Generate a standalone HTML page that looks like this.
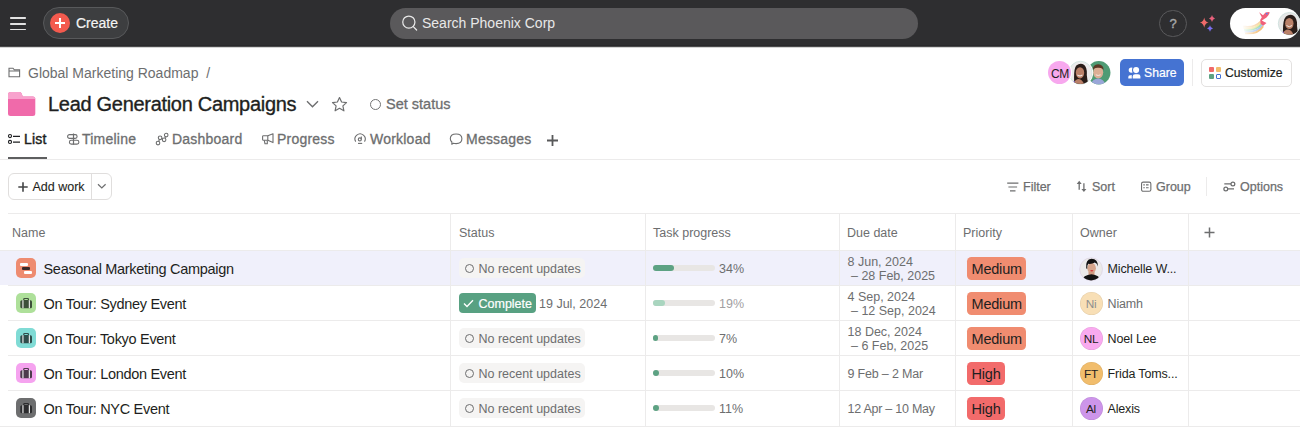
<!DOCTYPE html>
<html><head><meta charset="utf-8">
<style>
*{box-sizing:border-box;margin:0;padding:0}
html,body{width:1300px;height:437px;overflow:hidden;background:#fff;font-family:"Liberation Sans",sans-serif;color:#1e1f21}
.abs{position:absolute}
.t{position:absolute;white-space:nowrap;line-height:1}
svg{position:absolute;overflow:visible}
#top{position:absolute;left:0;top:0;width:1300px;height:45px;background:#2e2e30}
.ham{position:absolute;left:10.3px;width:15.8px;height:1.6px;background:#e2e2e2;border-radius:0.8px}
#create{position:absolute;left:43px;top:7px;width:86px;height:32px;border-radius:16px;background:#3d3e40;border:1px solid #58595b}
#search{position:absolute;left:390px;top:7.6px;width:527.6px;height:31.6px;border-radius:16px;background:#5a595b}
.tab{position:absolute;top:131.6px;font-size:14px;letter-spacing:0.22px;color:#6d6e6f;line-height:1;white-space:nowrap;-webkit-text-stroke:0.3px #6d6e6f}
.tb{position:absolute;top:181px;font-size:12.5px;color:#6d6e6f;line-height:1;white-space:nowrap;-webkit-text-stroke:0.25px #6d6e6f}
.hdr{position:absolute;top:227px;font-size:12.5px;color:#6d6e6f;line-height:1;white-space:nowrap}
.hl{position:absolute;left:0;width:1300px;height:1px;background:#ecebeb}
.vl{position:absolute;top:214px;height:212px;width:1px;background:#ecebeb}
.name{position:absolute;left:43.5px;font-size:14.5px;letter-spacing:-0.3px;color:#1e1f21;line-height:1;white-space:nowrap}
.ticon{position:absolute;left:16px;width:20px;height:20px;border-radius:5px}
.pill{position:absolute;left:458.5px;width:126px;height:20px;border-radius:5px;background:#f5f4f3}
.pill .c{position:absolute;left:6px;top:6px;width:9px;height:9px;border:1.3px solid #6d6e6f;border-radius:50%}
.pill .t{left:20px;top:5px;font-size:12.5px;color:#6d6e6f}
.bar{position:absolute;left:653px;width:62px;height:6px;border-radius:3px;background:#e8e6e4}
.bar i{position:absolute;left:0;top:0;height:6px;border-radius:3px;background:#5da283}
.pct{position:absolute;left:719px;font-size:12.5px;color:#6d6e6f;line-height:1}
.due{position:absolute;left:847.5px;font-size:12.5px;color:#6d6e6f;line-height:14px;white-space:pre}
.prio{position:absolute;left:967px;height:23.5px;border-radius:4.5px;font-size:14.5px;color:#1e1f21;padding:0 4.5px;line-height:24px;letter-spacing:-0.2px}
.av{position:absolute;left:1079.5px;width:23px;height:23px;border-radius:50%;font-size:11.8px;text-align:center;line-height:24px;box-shadow:inset 0 0 0 0.6px rgba(0,0,0,0.08);color:#1e1f21;letter-spacing:-0.3px}
.own{position:absolute;left:1107.5px;font-size:12.5px;color:#1e1f21;line-height:1;white-space:nowrap;letter-spacing:-0.15px}
</style></head><body>
<div class="abs" style="left:0;top:45px;width:1300px;height:1px;background:#28282a"></div><div class="abs" style="left:0;top:46px;width:1300px;height:1px;background:#4a4a4b"></div><div class="abs" style="left:0;top:47px;width:1300px;height:1px;background:#d4d4d4"></div>
<div id="top">
  <div class="ham" style="top:17.1px"></div>
  <div class="ham" style="top:23px"></div>
  <div class="ham" style="top:28.9px"></div>
  <div id="create"></div>
  <div class="abs" style="left:50px;top:13px;width:20px;height:20px;border-radius:50%;background:#f35a4e"></div>
  <div class="abs" style="left:55px;top:22.3px;width:9.6px;height:1.6px;background:#fff"></div>
  <div class="abs" style="left:59px;top:18.3px;width:1.6px;height:9.6px;background:#fff"></div>
  <div class="t" style="left:76px;top:16px;font-size:14px;color:#f5f4f3;-webkit-text-stroke:0.2px #f5f4f3">Create</div>
  <div id="search"></div>
  <svg style="left:400px;top:15px" width="20" height="18"><circle cx="8.85" cy="7.1" r="6.1" fill="none" stroke="#e8e8e8" stroke-width="1.25"/><path d="M13.3 11.6 L16.6 15" stroke="#e8e8e8" stroke-width="1.3" stroke-linecap="round"/></svg>
  <div class="t" style="left:422px;top:16px;font-size:14px;color:#e8e8e8">Search Phoenix Corp</div>
  <div class="abs" style="left:1159.3px;top:9.5px;width:27.4px;height:27.4px;border-radius:50%;border:1px solid #5a5a5c"></div>
  <div class="t" style="left:1169.5px;top:17.3px;font-size:13px;color:#a8a8a9;-webkit-text-stroke:0.4px #a8a8a9">?</div>
  <svg style="left:1196px;top:13px" width="24" height="22">
    <path d="M8.2 4.5 Q8.9 8.8 12.6 9.6 Q8.9 10.4 8.2 14.7 Q7.5 10.4 3.8 9.6 Q7.5 8.8 8.2 4.5Z" fill="#f06a6a"/>
    <path d="M16 2 Q16.5 5 19 5.5 Q16.5 6 16 9 Q15.5 6 13 5.5 Q15.5 5 16 2Z" fill="#e8617c"/>
    <path d="M14 12.2 Q14.5 15 17 15.5 Q14.5 16 14 18.8 Q13.5 16 11 15.5 Q13.5 15 14 12.2Z" fill="#7a6ff0"/>
  </svg>
  <div class="abs" style="left:1229.5px;top:7.5px;width:70.5px;height:31.5px;border-radius:16px;background:#fff"></div>
  <svg style="left:1240px;top:8px" width="36" height="30">
    <defs><linearGradient id="fade" x1="0" y1="0" x2="1" y2="0"><stop offset="0.1" stop-color="#fff" stop-opacity="0.95"/><stop offset="0.85" stop-color="#fff" stop-opacity="0"/></linearGradient></defs>
    <path d="M3 18.5 Q14 20.5 20.5 13.5" fill="none" stroke="#f7cfa0" stroke-width="1.8"/>
    <path d="M3.5 20.2 Q15 22 21.3 14.6" fill="none" stroke="#f5e39a" stroke-width="1.8"/>
    <path d="M4 21.9 Q16 23.5 22 15.8" fill="none" stroke="#9fdcae" stroke-width="1.8"/>
    <path d="M4.5 23.6 Q17 25 22.6 17" fill="none" stroke="#a9c6f2" stroke-width="1.8"/>
    <path d="M5 25.3 Q18 26.5 23.2 18.2" fill="none" stroke="#f4c07a" stroke-width="1.8"/>
    <rect x="0" y="10" width="24" height="20" fill="url(#fade)"/>
    <path d="M19.1 4.2 L23 7.3 L25.5 4.6 L28.5 4 L29.8 4.4 L28.4 7.2 L26.5 9.5 L24.6 10.7 L21.8 12.4 L24 13.8 L26.5 15.1 L23.2 17.8 L20.6 15.8 L20.2 12 L21.8 9.2 Z" fill="#f0607a"/>
    <circle cx="26.8" cy="5.6" r="0.9" fill="#5a7af0"/>
  </svg>
  <svg style="left:1278px;top:12px" width="23" height="24">
    <defs><clipPath id="c0"><circle cx="11.5" cy="11.6" r="11"/></clipPath></defs>
    <circle cx="11.5" cy="11.6" r="11.2" fill="#e6e6e6" stroke="#c6dcd8" stroke-width="0.7"/>
    <g clip-path="url(#c0)">
      <path d="M5 22 Q4.5 8 8 4.5 Q12 1.5 16 4 Q19.5 7 19 14 Q19.5 20 21 24 L16 24 Z" fill="#2a1d19"/>
      <ellipse cx="11.3" cy="11.5" rx="4.2" ry="5.6" fill="#b98068"/>
      <path d="M8.5 13.5 Q11.3 16 14 13.5" fill="none" stroke="#f0e6e0" stroke-width="1"/>
      <path d="M3 24 Q6 17.5 10 17.5 Q14 18 16 24Z" fill="#b98068"/>
      <path d="M2 23 Q3 20 5.5 19.5 L6 24Z" fill="#7a56e0"/>
    </g>
  </svg>
</div>

<!-- header -->
<svg style="left:8px;top:67px" width="13" height="11"><path d="M1 1.2 H5 L6.3 2.8 H11.6 V9.8 H1 Z M1 4 H11.6" fill="none" stroke="#6d6e6f" stroke-width="1.1"/></svg>
<div class="t" style="left:28px;top:66px;font-size:14px;color:#6d6e6f">Global Marketing Roadmap&nbsp; /</div>

<svg style="left:8px;top:91.5px" width="28" height="25"><path d="M0 2.5 Q0 0 2.5 0 H11.5 Q12.8 0 13.5 1.2 L14.8 4.4 H24.8 Q27.3 4.4 27.3 6.9 V21.6 Q27.3 24.1 24.8 24.1 H2.5 Q0 24.1 0 21.6Z" fill="#f06aaa"/><path d="M0 2.5 Q0 0 2.5 0 H11.5 Q12.8 0 13.5 1.2 L14.8 4.4 H24.8 Q27.3 4.4 27.3 6.9 V7 H0Z" fill="#f8a2cd"/></svg>
<div class="t" style="left:48px;top:94px;font-size:20px;letter-spacing:-0.3px;color:#1e1f21;-webkit-text-stroke:0.35px #1e1f21">Lead Generation Campaigns</div>
<svg style="left:306px;top:100px" width="14" height="9"><path d="M1 1.2 L6.5 6.7 L12 1.2" fill="none" stroke="#6d6e6f" stroke-width="1.4"/></svg>
<svg style="left:331px;top:95.5px" width="18" height="18"><path d="M8.5 1.5 L10.6 6 L15.5 6.6 L11.9 9.9 L12.9 14.8 L8.5 12.3 L4.1 14.8 L5.1 9.9 L1.5 6.6 L6.4 6 Z" fill="none" stroke="#6d6e6f" stroke-width="1.2" stroke-linejoin="round"/></svg>
<div class="abs" style="left:370px;top:98.5px;width:11.2px;height:11.2px;border-radius:50%;border:1px solid #737475"></div>
<div class="t" style="left:386px;top:97px;font-size:14.5px;color:#6d6e6f;-webkit-text-stroke:0.3px #6d6e6f">Set status</div>

<!-- right header -->
<svg style="left:1085px;top:59px" width="28" height="28">
  <defs><clipPath id="c2"><circle cx="13.8" cy="13.75" r="11.5"/></clipPath></defs>
  <circle cx="13.8" cy="13.75" r="11.65" fill="#4f9b74"/>
  <g clip-path="url(#c2)">
    <ellipse cx="13.2" cy="13.3" rx="5" ry="6.2" fill="#dcae95"/>
    <path d="M7.8 11.5 Q7.5 5.5 13.2 5.3 Q18.8 5.5 18.6 11.5 Q17.6 8.5 13.2 8.8 Q8.8 8.5 7.8 11.5Z" fill="#5b3a26"/>
    <path d="M10.8 15.8 Q13.2 17.2 15.6 15.8" fill="none" stroke="#f5eee8" stroke-width="0.9"/>
    <path d="M5 27 Q7 19.5 13.2 19.5 Q19 19.5 21 27Z" fill="#9aa6d8"/>
  </g>
</svg>
<svg style="left:1067px;top:59px" width="28" height="28">
  <defs><clipPath id="c1"><circle cx="13.5" cy="13.75" r="11.2"/></clipPath></defs>
  <circle cx="13.5" cy="13.75" r="12.7" fill="#fff"/>
  <circle cx="13.5" cy="13.75" r="11.5" fill="#ecebeb" stroke="#c9e2dc" stroke-width="0.7"/>
  <g clip-path="url(#c1)">
    <path d="M7.3 25 Q6.3 10 9.3 6.5 Q13.3 3.5 17.3 6 Q20.3 9 19.8 16 Q20.1 22 22.3 26 L16.8 26 Z" fill="#2a1d19"/>
    <ellipse cx="13" cy="13.8" rx="4.2" ry="5.6" fill="#b98068"/>
    <path d="M10.4 15.8 Q13 18 15.4 15.8" fill="none" stroke="#f3ece8" stroke-width="1.1"/>
    <path d="M5.3 27 Q7.8 20 11.8 20 Q15.8 20.5 17.8 27Z" fill="#b98068"/>
    <path d="M3.8 26 Q4.8 22.5 7.6 22 L8.1 27Z" fill="#7a56e0"/>
  </g>
</svg>
<div class="abs" style="left:1046.9px;top:60.1px;width:25.3px;height:25.3px;border-radius:50%;background:#fff"></div>
<div class="abs" style="left:1048px;top:61.1px;width:23.3px;height:23.3px;border-radius:50%;background:#f7a8ee"></div>
<div class="t" style="left:1051px;top:68px;font-size:12px;color:#1e1f21;letter-spacing:-0.3px">CM</div>
<div class="abs" style="left:1120px;top:59px;width:64px;height:27px;border-radius:5px;background:#4573d2"></div>
<svg style="left:1124px;top:62px" width="22" height="22"><defs><mask id="shm"><rect width="22" height="22" fill="#fff"/><circle cx="12.1" cy="8.1" r="4.1" fill="#000"/><path d="M7.8 17 V14.3 Q7.8 11.3 11 11.3 H14 Q17 11.3 17 14.3 V17Z" fill="#000"/></mask></defs><g mask="url(#shm)"><circle cx="7.4" cy="8.1" r="2.7" fill="#fff"/><path d="M4.3 16.6 V14.9 Q4.3 13.2 6 13.2 H8 V16.6Z" fill="#fff"/></g><circle cx="12.1" cy="8.1" r="3.05" fill="#fff"/><path d="M8.7 16.6 V14.6 Q8.7 12.2 11.1 12.2 H14 Q16.4 12.2 16.4 14.6 V16.6Z" fill="#fff"/></svg>
<div class="t" style="left:1144px;top:67px;font-size:12.2px;color:#fff;-webkit-text-stroke:0.2px #fff">Share</div>
<div class="abs" style="left:1192px;top:59px;width:1px;height:27px;background:#ecebeb"></div>
<div class="abs" style="left:1201px;top:59px;width:91px;height:27.5px;border-radius:5px;border:1px solid #e3e1e0"></div>
<div class="abs" style="left:1209px;top:67px;width:5px;height:5px;border-radius:1px;background:#f06a6a"></div>
<div class="abs" style="left:1216px;top:67px;width:5px;height:5px;border-radius:1px;background:#f1bd6c"></div>
<div class="abs" style="left:1209px;top:74px;width:5px;height:5px;border-radius:1px;background:#5da283"></div>
<div class="abs" style="left:1216px;top:74px;width:5px;height:5px;border-radius:1px;border:1.2px solid #4573d2"></div>
<div class="t" style="left:1225px;top:67px;font-size:12.2px;color:#1e1f21;-webkit-text-stroke:0.2px #1e1f21">Customize</div>

<!-- tabs -->
<svg style="left:7px;top:133px" width="15" height="13"><g fill="none" stroke="#1e1f21" stroke-width="1.1"><circle cx="3" cy="3.1" r="1.55"/><circle cx="3" cy="8.9" r="1.55"/><path d="M6 3.4 H13 M6 9.1 H13" stroke-width="1.2"/></g></svg>
<div class="tab" style="left:24px;color:#1e1f21;-webkit-text-stroke:0.45px #1e1f21">List</div>
<svg style="left:66px;top:133px" width="15" height="13"><rect x="1.6" y="1.6" width="9.5" height="3.8" rx="1.9" fill="none" stroke="#6d6e6f" stroke-width="1.1"/><rect x="3.4" y="7.3" width="9.5" height="3.8" rx="1.9" fill="none" stroke="#6d6e6f" stroke-width="1.1"/><path d="M7.5 0.5 V11.6" stroke="#6d6e6f" stroke-width="1.2"/></svg>
<div class="tab" style="left:82px">Timeline</div>
<svg style="left:155px;top:132px" width="15" height="14"><g fill="none" stroke="#6d6e6f" stroke-width="1.1"><circle cx="3" cy="11.1" r="1.8"/><circle cx="5.1" cy="5.8" r="1.8"/><circle cx="9.1" cy="7.8" r="1.8"/><circle cx="11.2" cy="3.1" r="1.8"/><path d="M3.7 9.4 L4.4 7.5 M6.7 6.6 L7.5 7 M9.9 6.1 L10.5 4.8"/></g></svg>
<div class="tab" style="left:172px">Dashboard</div>
<svg style="left:258px;top:128px" width="18" height="20"><g fill="none" stroke="#6d6e6f" stroke-width="1.1" stroke-linejoin="round"><path d="M5.4 7.7 H9.8 V12.3 H5.4 Q4.6 12.3 4.6 11.5 V8.5 Q4.6 7.7 5.4 7.7Z"/><path d="M9.8 7.7 L15 5.8 V14.6 L9.8 12.3"/><path d="M6.3 12.3 L7 15.8 H9.3 V12.5"/></g></svg>
<div class="tab" style="left:277px">Progress</div>
<svg style="left:350px;top:128px" width="20" height="20"><g fill="none" stroke="#6d6e6f" stroke-width="1.1"><path d="M5.7 13.6 A5.1 5.1 0 1 1 14.5 13.6"/><circle cx="9.8" cy="11.4" r="1.5"/><path d="M11.3 11.6 V8.4"/><path d="M8 15.4 H12.2"/></g></svg>
<div class="tab" style="left:370px">Workload</div>
<svg style="left:445px;top:128px" width="20" height="20"><path d="M8.4 15.3 Q9.7 15.6 11.1 15.6 Q16.9 15.6 16.9 10.8 Q16.9 6 11.1 6 Q5.3 6 5.3 10.8 Q5.3 12.8 6.9 14 L6.8 16.2 Z" fill="none" stroke="#6d6e6f" stroke-width="1.1" stroke-linejoin="round"/></svg>
<div class="tab" style="left:466px">Messages</div>
<svg style="left:546px;top:134px" width="13" height="13"><path d="M6.5 1 V12 M1 6.5 H12" stroke="#58595a" stroke-width="1.8"/></svg>
<div class="abs" style="left:8px;top:157px;width:39px;height:2px;background:#5e5f60"></div>
<div class="hl" style="top:159px"></div>

<!-- toolbar -->
<div class="abs" style="left:8px;top:173px;width:104px;height:27px;border:1px solid #e0dedd;border-radius:6px"></div>
<div class="abs" style="left:91px;top:174px;width:1px;height:25px;background:#e0dedd"></div>
<svg style="left:17.5px;top:181.5px" width="11" height="11"><path d="M5 0.3 V9.7 M0.3 5 H9.7" stroke="#444546" stroke-width="1.6"/></svg>
<div class="t" style="left:32.5px;top:181px;font-size:12.5px;color:#1e1f21;-webkit-text-stroke:0.1px #1e1f21">Add work</div>
<svg style="left:97px;top:183px" width="10" height="7"><path d="M1 1.3 L4.8 5 L8.6 1.3" fill="none" stroke="#6d6e6f" stroke-width="1.2"/></svg>

<svg style="left:1007px;top:182px" width="12" height="10"><path d="M0.2 1.2 H11.4 M1.4 5 H10.1 M3 8.8 H8.5" stroke="#6d6e6f" stroke-width="1.2"/></svg>
<div class="tb" style="left:1023px">Filter</div>
<svg style="left:1070px;top:175px" width="25" height="23"><path d="M9.2 8 V14.7 M13.9 8.2 V14.6" stroke="#6d6e6f" stroke-width="1.3"/><path d="M6.7 8.9 L9.2 5.8 L11.7 8.9 Z M11.4 14 L13.9 17 L16.4 14 Z" fill="#6d6e6f"/></svg>
<div class="tb" style="left:1092px">Sort</div>
<svg style="left:1140px;top:181px" width="12" height="11"><rect x="1.55" y="1.15" width="9.3" height="9.1" rx="1.6" fill="none" stroke="#6d6e6f" stroke-width="1.1"/><path d="M3.3 3.9 H4.8 M6 3.9 H8.6 M3.3 6.8 H4.8 M6 6.8 H8.6" stroke="#6d6e6f" stroke-width="1.1"/></svg>
<div class="tb" style="left:1156px">Group</div>
<div class="abs" style="left:1206px;top:177px;width:1px;height:19px;background:#ecebeb"></div>
<svg style="left:1215px;top:175px" width="25" height="22"><g fill="none" stroke="#6d6e6f" stroke-width="1.25"><circle cx="17.9" cy="8.9" r="1.9"/><circle cx="10.8" cy="13.9" r="1.9"/><path d="M9.3 8.9 H16 M12.7 13.9 H19"/></g></svg>
<div class="tb" style="left:1240px">Options</div>

<!-- table -->
<div class="abs" style="left:8px;top:213px;width:1292px;height:1px;background:#ecebeb"></div>
<div class="hdr" style="left:12px">Name</div>
<div class="hdr" style="left:459px">Status</div>
<div class="hdr" style="left:653px">Task progress</div>
<div class="hdr" style="left:847px">Due date</div>
<div class="hdr" style="left:963px">Priority</div>
<div class="hdr" style="left:1080px">Owner</div>
<svg style="left:1204px;top:227px" width="11" height="11"><path d="M5.5 0.5 V10.5 M0.5 5.5 H10.5" stroke="#6d6e6f" stroke-width="1.5"/></svg>

<div class="abs" style="left:0;top:250px;width:1300px;height:35px;background:#f0f0fb"></div>
<div class="hl" style="top:250px"></div>
<div class="hl" style="top:285px;left:8px"></div>
<div class="hl" style="top:320px;left:8px"></div>
<div class="hl" style="top:355px;left:8px"></div>
<div class="hl" style="top:390px;left:8px"></div>
<div class="hl" style="top:426px"></div>
<div class="vl" style="left:450px"></div>
<div class="vl" style="left:645px"></div>
<div class="vl" style="left:839px"></div>
<div class="vl" style="left:955px"></div>
<div class="vl" style="left:1072px"></div>
<div class="vl" style="left:1188px"></div>

<!-- row icons -->
<div class="ticon" style="top:258px;background:#ee8b70"></div>
<div class="abs" style="left:20px;top:263px;width:8px;height:2.5px;background:#fff;border-radius:1px"></div>
<div class="abs" style="left:22px;top:267px;width:8px;height:3px;background:#3a2a2a;border-radius:1px"></div>
<div class="abs" style="left:24px;top:271px;width:8px;height:3px;background:#fff;border-radius:1px"></div>

<div class="ticon" style="top:293px;background:#aee09a"></div>
<div class="ticon" style="top:328px;background:#80dbd5"></div>
<div class="ticon" style="top:363px;background:#f5a3ef"></div>
<div class="ticon" style="top:398px;background:#6d6e6f"></div>
<svg style="left:19px;top:297px" width="15" height="13"><rect x="4.2" y="1" width="5.8" height="3" rx="1.2" fill="#3d4f3a"/><rect x="5.3" y="1.9" width="3.6" height="1.1" rx="0.5" fill="#aee09a"/><rect x="1.3" y="3.2" width="11.7" height="8" rx="1.5" fill="#3d4f3a"/><rect x="3.4" y="3.2" width="1.1" height="8" fill="#f4f4f4"/><rect x="9.8" y="3.2" width="1.1" height="8" fill="#f4f4f4"/></svg>
<svg style="left:19px;top:332px" width="15" height="13"><rect x="4.2" y="1" width="5.8" height="3" rx="1.2" fill="#2f4d4b"/><rect x="5.3" y="1.9" width="3.6" height="1.1" rx="0.5" fill="#80dbd5"/><rect x="1.3" y="3.2" width="11.7" height="8" rx="1.5" fill="#2f4d4b"/><rect x="3.4" y="3.2" width="1.1" height="8" fill="#f4f4f4"/><rect x="9.8" y="3.2" width="1.1" height="8" fill="#f4f4f4"/></svg>
<svg style="left:19px;top:367px" width="15" height="13"><rect x="4.2" y="1" width="5.8" height="3" rx="1.2" fill="#4d3b4c"/><rect x="5.3" y="1.9" width="3.6" height="1.1" rx="0.5" fill="#f5a3ef"/><rect x="1.3" y="3.2" width="11.7" height="8" rx="1.5" fill="#4d3b4c"/><rect x="3.4" y="3.2" width="1.1" height="8" fill="#f4f4f4"/><rect x="9.8" y="3.2" width="1.1" height="8" fill="#f4f4f4"/></svg>
<svg style="left:19px;top:402px" width="15" height="13"><rect x="4.2" y="1" width="5.8" height="3" rx="1.2" fill="#2c2c2e"/><rect x="5.3" y="1.9" width="3.6" height="1.1" rx="0.5" fill="#6d6e6f"/><rect x="1.3" y="3.2" width="11.7" height="8" rx="1.5" fill="#2c2c2e"/><rect x="3.4" y="3.2" width="1.1" height="8" fill="#f4f4f4"/><rect x="9.8" y="3.2" width="1.1" height="8" fill="#f4f4f4"/></svg>

<div class="name" style="top:262px">Seasonal Marketing Campaign</div>
<div class="name" style="top:297px">On Tour: Sydney Event</div>
<div class="name" style="top:332px">On Tour: Tokyo Event</div>
<div class="name" style="top:367px">On Tour: London Event</div>
<div class="name" style="top:402px">On Tour: NYC Event</div>

<!-- status -->
<div class="pill" style="top:258px"><div class="c"></div><div class="t">No recent updates</div></div>
<div class="abs" style="left:458.5px;top:293px;width:77.3px;height:20px;border-radius:4px;background:#58a182"></div>
<svg style="left:463px;top:299px" width="11" height="9"><path d="M1 4.5 L4 7.5 L10 1.3" fill="none" stroke="#fff" stroke-width="1.4"/></svg>
<div class="t" style="left:478.5px;top:298px;font-size:12.5px;color:#fff;-webkit-text-stroke:0.2px #fff">Complete</div>
<div class="t" style="left:539px;top:298px;font-size:12.5px;color:#6d6e6f">19 Jul, 2024</div>
<div class="pill" style="top:328px"><div class="c"></div><div class="t">No recent updates</div></div>
<div class="pill" style="top:363px"><div class="c"></div><div class="t">No recent updates</div></div>
<div class="pill" style="top:398px"><div class="c"></div><div class="t">No recent updates</div></div>

<!-- progress -->
<div class="bar" style="top:265px"><i style="width:21px"></i></div>
<div class="pct" style="top:263px">34%</div>
<div class="bar" style="top:300px"><i style="width:12px;background:#a9d5bf"></i></div>
<div class="pct" style="top:298px;color:#a2a0a2">19%</div>
<div class="bar" style="top:335px"><i style="width:5px"></i></div>
<div class="pct" style="top:333px">7%</div>
<div class="bar" style="top:370px"><i style="width:6px"></i></div>
<div class="pct" style="top:368px">10%</div>
<div class="bar" style="top:405px"><i style="width:6px"></i></div>
<div class="pct" style="top:403px">11%</div>

<!-- due -->
<div class="due" style="top:255px">8 Jun, 2024
 – 28 Feb, 2025</div>
<div class="due" style="top:290px">4 Sep, 2024
 – 12 Sep, 2024</div>
<div class="due" style="top:325px">18 Dec, 2024
 – 6 Feb, 2025</div>
<div class="due" style="top:367px;letter-spacing:-0.18px">9 Feb – 2 Mar</div>
<div class="due" style="top:402px;letter-spacing:-0.25px">12 Apr – 10 May</div>

<!-- priority -->
<div class="prio" style="top:256.5px;background:#f08c70">Medium</div>
<div class="prio" style="top:291.5px;background:#f08c70">Medium</div>
<div class="prio" style="top:326.5px;background:#f08c70">Medium</div>
<div class="prio" style="top:361.5px;background:#f26b6b">High</div>
<div class="prio" style="top:396.5px;background:#f26b6b">High</div>

<!-- owner -->
<svg style="left:1076px;top:254px" width="30" height="30">
  <defs><clipPath id="c3"><circle cx="15.1" cy="15.2" r="11.2"/></clipPath></defs>
  <circle cx="15.1" cy="15.2" r="11.4" fill="#ebeae9" stroke="#d9cce0" stroke-width="0.6"/>
  <g clip-path="url(#c3)">
    <ellipse cx="15.6" cy="14.2" rx="4.3" ry="5.4" fill="#d6a68c"/>
    <path d="M12.5 18 H18.5 V21 H12.5Z" fill="#cf9c82"/>
    <path d="M5 28 Q6.5 21 15.5 20.2 Q24 21 25.5 28 Z" fill="#131313"/>
    <path d="M10.2 14.5 Q9.2 5.5 15.5 4.8 Q22 5 22 12.5 Q21 9 18.8 8.6 Q16 10.2 12.2 9.8 Q11 11.2 11.2 14.8 Z" fill="#121212"/>
    <ellipse cx="15.8" cy="16.8" rx="1.6" ry="0.75" fill="#d2383a"/>
  </g>
</svg>
<div class="own" style="top:263px">Michelle W...</div>
<div class="av" style="top:291.5px;background:#f8dfb6;color:#8f8f8f">Ni</div>
<div class="own" style="top:298px;color:#6d6e6f">Niamh</div>
<div class="av" style="top:326.5px;background:#f9aaef">NL</div>
<div class="own" style="top:333px">Noel Lee</div>
<div class="av" style="top:361.5px;background:#f1bd6c">FT</div>
<div class="own" style="top:368px">Frida Toms...</div>
<div class="av" style="top:396.5px;background:#cd95ea">Al</div>
<div class="own" style="top:403px">Alexis</div>

</body></html>
